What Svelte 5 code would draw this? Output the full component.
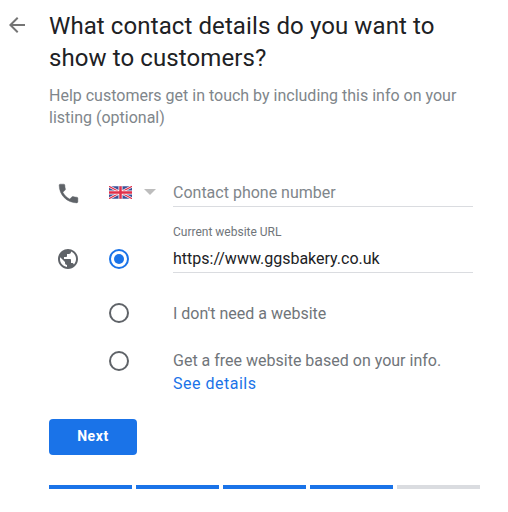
<script lang="ts">
  const segments = [true, true, true, true, false];
</script>

<div class="page">
  <div class="header">
    <svg class="back" viewBox="0 0 24 24" width="24" height="24">
      <path d="M20 11H7.83l5.59-5.59L12 4l-8 8 8 8 1.41-1.41L7.83 13H20v-2z" fill="#757575" />
    </svg>
    <div>
      <h1>What contact details do you want to show to customers?</h1>
      <p class="sub">Help customers get in touch by including this info on your listing (optional)</p>
    </div>
  </div>

  <div class="form">
    <div class="icon-cell">
      <svg viewBox="0 0 24 24" width="25" height="25">
        <path fill="#5f6368" stroke="#5f6368" stroke-width="0.4" d="M6.62 10.79c1.44 2.83 3.76 5.14 6.59 6.59l2.2-2.2c.27-.27.67-.36 1.02-.24 1.12.37 2.33.57 3.57.57.55 0 1 .45 1 1V20c0 .55-.45 1-1 1-9.39 0-17-7.61-17-17 0-.55.45-1 1-1h3.5c.55 0 1 .45 1 1 0 1.25.2 2.45.57 3.57.11.35.03.74-.25 1.02l-2.2 2.2z" />
      </svg>
    </div>
    <div class="flag-cell">
      <svg class="flag" viewBox="0 0 24 13" width="23" height="13">
        <rect width="24" height="13" fill="#3a4f96" />
        <path d="M0 0l24 13M24 0L0 13" stroke="#fff" stroke-width="2.6" />
        <path d="M0 0l24 13M24 0L0 13" stroke="#e0304a" stroke-width="1.2" />
        <path d="M12 0v13M0 6.5h24" stroke="#fff" stroke-width="4.2" />
        <path d="M12 0v13M0 6.5h24" stroke="#e0304a" stroke-width="2.6" />
      </svg>
      <span class="caret"></span>
    </div>
    <div class="field phone">
      <span class="placeholder">Contact phone number</span>
    </div>

    <div class="icon-cell web">
      <svg viewBox="0 0 24 24" width="24" height="24">
        <path fill="#5f6368" d="M12 2C6.48 2 2 6.48 2 12s4.48 10 10 10 10-4.48 10-10S17.52 2 12 2zm-1 17.93c-3.95-.49-7-3.85-7-7.93 0-.62.08-1.21.21-1.79L9 15v1c0 1.1.9 2 2 2v1.93zm6.9-2.54c-.26-.81-1-1.39-1.9-1.39h-1v-3c0-.55-.45-1-1-1H8v-2h2c.55 0 1-.45 1-1V7h2c1.1 0 2-.9 2-2v-.41c2.93 1.19 5 4.06 5 7.41 0 2.08-.8 3.97-2.1 5.39z" />
      </svg>
    </div>
    <div class="radio-cell web-radio">
      <span class="radio on"></span>
    </div>
    <div class="field url">
      <span class="label">Current website URL</span>
      <span class="value">https://www.ggsbakery.co.uk</span>
    </div>

    <div class="radio-cell none">
      <span class="radio"></span>
    </div>
    <div class="option none">I don't need a website</div>

    <div class="radio-cell free">
      <span class="radio"></span>
    </div>
    <div class="option free">
      Get a free website based on your info.<br />
      <span class="link">See details</span>
    </div>
  </div>

  <button class="next">Next</button>

  <div class="progress">
    {#each segments as done}
      <span class="seg" class:done></span>
    {/each}
  </div>
</div>

<style>
  :global(body) {
    margin: 0;
    background: #fff;
  }

  .page {
    width: 508px;
    height: 512px;
    box-sizing: border-box;
    padding: 10px 28px 0 49px;
    font-family: Roboto, sans-serif;
    position: relative;
  }

  .header {
    position: relative;
  }

  .back {
    position: absolute;
    left: -44px;
    top: 3px;
  }

  h1 {
    margin: 0;
    font-size: 24px;
    line-height: 32px;
    font-weight: 400;
    color: #202124;
    letter-spacing: 0.1px;
    width: 400px;
  }

  .sub {
    margin: 11px 0 0;
    font-size: 16px;
    line-height: 22px;
    color: #80868b;
    width: 420px;
  }

  .form {
    display: grid;
    grid-template-columns: 39px 85px 300px;
    grid-template-rows: 45px 57px 62px 65px;
    margin: 42px 0 0 0;
    align-items: center;
  }

  .icon-cell {
    display: flex;
    padding-left: 7px;
    align-self: start;
    padding-top: 10px;
  }

  .icon-cell svg {
    display: block;
  }

  .flag-cell {
    display: flex;
    align-items: center;
    padding-left: 21px;
    gap: 12px;
    margin-bottom: 3px;
  }

  .flag {
    display: block;
  }

  .caret {
    width: 0;
    height: 0;
    border-left: 6px solid transparent;
    border-right: 6px solid transparent;
    border-top: 6px solid #bdbdbd;
  }

  .field {
    border-bottom: 1px solid #dadce0;
    box-sizing: border-box;
  }

  .phone {
    height: 36px;
    align-self: start;
    padding-top: 8px;
    line-height: 28px;
  }

  .placeholder {
    font-size: 16px;
    color: #80868b;
  }

  .url {
    display: flex;
    flex-direction: column;
    height: 57px;
    align-self: start;
    padding-top: 9px;
  }

  .label {
    font-size: 12px;
    line-height: 14px;
    color: #70757a;
  }

  .value {
    font-size: 16px;
    line-height: 26px;
    margin-top: 7px;
    color: #202124;
  }

  .web {
    align-self: end;
    padding-top: 0;
    padding-bottom: 2px;
  }

  .web-radio {
    align-self: end;
    padding-bottom: 4px;
  }

  .radio-cell {
    display: flex;
    padding-left: 21px;
  }

  .radio-cell.none {
    grid-column: 2;
    padding-top: 18px;
  }

  .radio-cell.free {
    grid-column: 2;
    align-self: start;
    padding-top: 16px;
  }

  .radio {
    width: 20px;
    height: 20px;
    box-sizing: border-box;
    border: 2px solid #5f6368;
    border-radius: 50%;
    position: relative;
    display: block;
  }

  .radio.on {
    border-color: #1a73e8;
  }

  .radio.on::after {
    content: "";
    position: absolute;
    inset: 3px;
    border-radius: 50%;
    background: #1a73e8;
  }

  .option {
    font-size: 16px;
    color: #70757a;
  }

  .option.none {
    padding-top: 18px;
  }

  .option.free {
    align-self: start;
    line-height: 23px;
    padding-top: 14px;
  }

  .link {
    color: #1a73e8;
    letter-spacing: 0.5px;
  }

  .next {
    display: block;
    margin-top: 19px;
    width: 88px;
    height: 36px;
    background: #1a73e8;
    color: #fff;
    border: none;
    border-radius: 4px;
    font-family: Roboto, sans-serif;
    font-size: 14px;
    font-weight: 700;
    letter-spacing: 0.6px;
    padding: 0 0 2px;
  }

  .progress {
    display: flex;
    gap: 4px;
    margin-top: 30px;
    width: 431px;
  }

  .seg {
    flex: 1;
    height: 4px;
    background: #dadce0;
  }

  .seg.done {
    background: #1a73e8;
  }
</style>
